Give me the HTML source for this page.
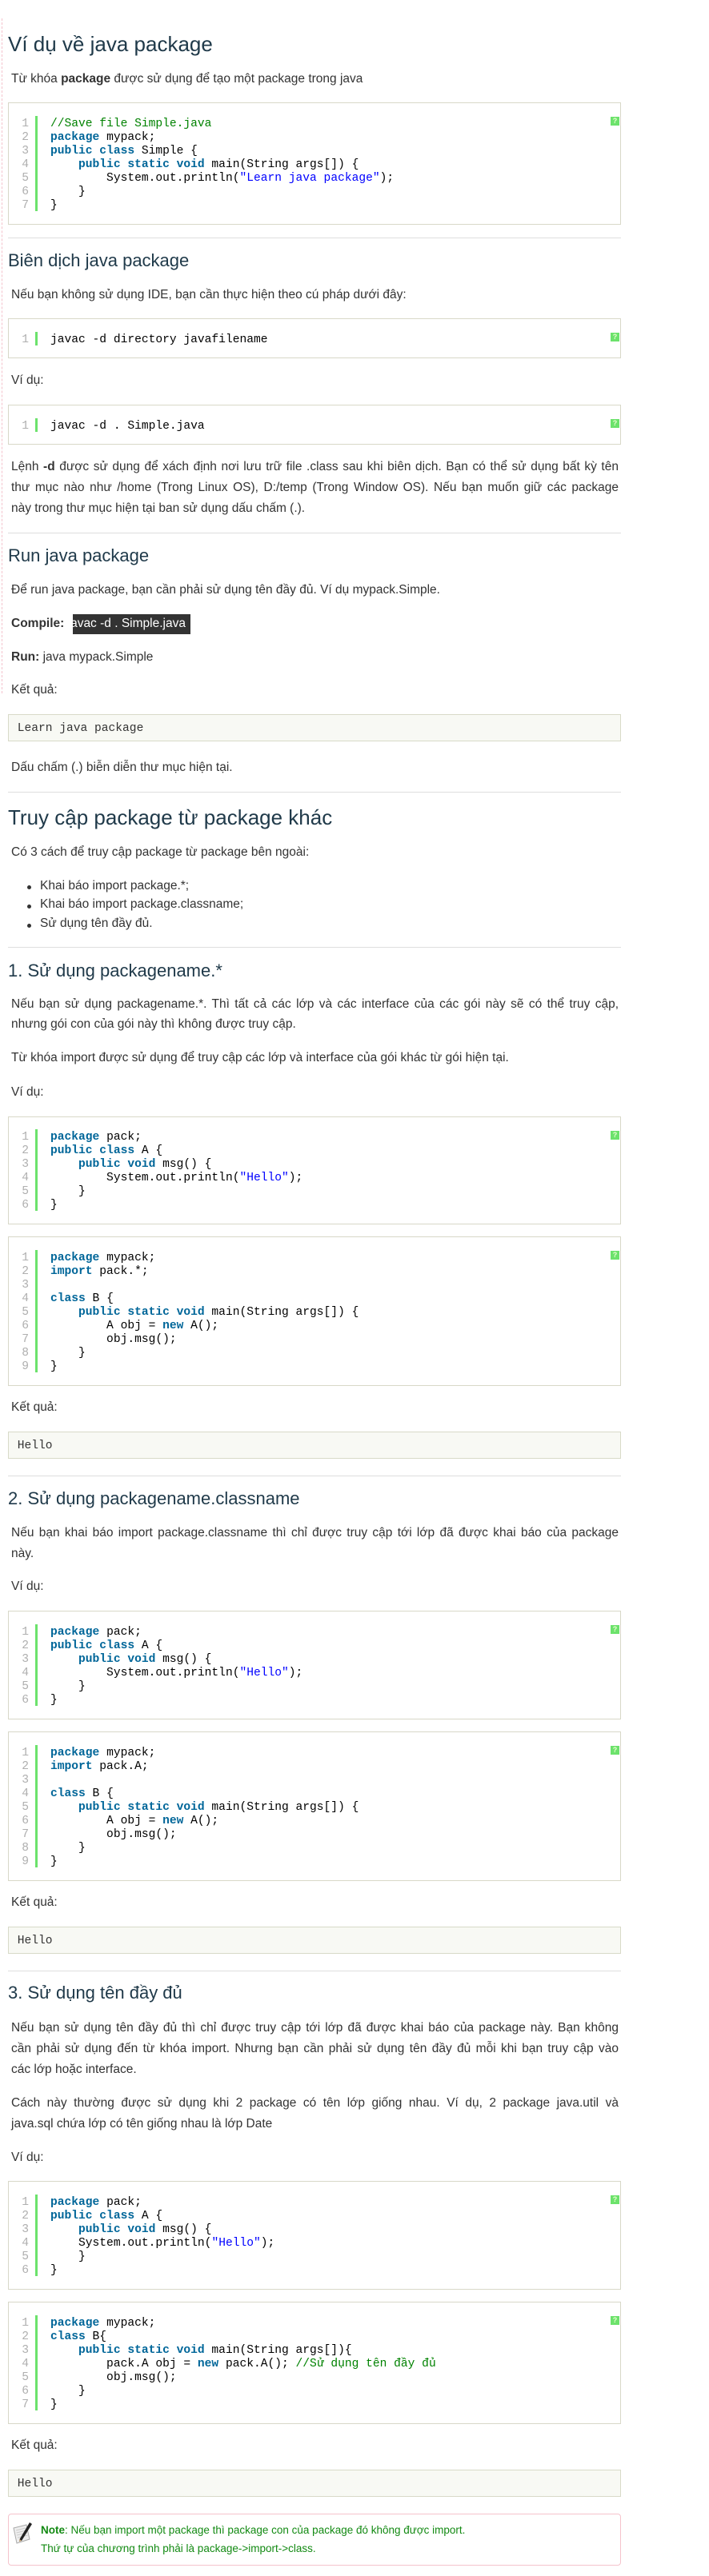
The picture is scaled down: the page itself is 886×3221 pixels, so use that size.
<!DOCTYPE html>
<html><head><meta charset="utf-8">
<style>
*{margin:0;padding:0;box-sizing:border-box}
body{width:886px;height:3221px;background:#fff;position:relative;overflow:hidden;font-family:"Liberation Sans",Arial,sans-serif;color:#333}
.t{position:absolute;left:14px;font-size:15.5px;line-height:26px;white-space:nowrap}
.j{position:absolute;left:14px;width:759px;font-size:15.5px;line-height:26px;text-align:justify;text-align-last:justify;white-space:nowrap}
.h2{position:absolute;left:10px;font-size:26px;line-height:30px;color:#203a4a;white-space:nowrap}
.h3{position:absolute;left:10px;font-size:22px;line-height:26px;color:#203a4a;white-space:nowrap}
.hr{position:absolute;left:10px;width:766px;height:1px;background:#dedede}
.cb{position:absolute;left:10px;width:766px;border:1px solid #d8d8c8;background:#fff}
.cb .bar{position:absolute;left:33px;top:15.7px;width:3px;background:#6ce26c}
.cb .ln{position:absolute;left:0;top:17.6px;width:25px;text-align:right;color:#afafaf;font-family:"Liberation Mono",monospace;font-size:14.6px;line-height:17px;white-space:pre}
.cb .cd{position:absolute;left:52px;top:17.6px;color:#000;font-family:"Liberation Mono",monospace;font-size:14.6px;line-height:17px;white-space:pre}
.cb .q{position:absolute;left:752px;top:17px;width:11px;height:11px;background:#6ce26c;color:#eaffd0;font:bold 9px/11px "Liberation Sans",sans-serif;text-align:center}
.k{color:#006699;font-weight:bold}
.s{color:#0000ff}
.c{color:#008200}
.ob{position:absolute;left:10px;width:766px;height:34px;border:1px solid #d8dac8;background:#f8f9f4;font-family:"Liberation Mono",monospace;font-size:14.6px;line-height:17px;color:#333;padding:9.2px 0 0 10.7px;white-space:pre}
.dot{position:absolute;left:34px;width:5px;height:5px;border-radius:50%;background:#333}
</style></head><body>
<div style="position:absolute;left:2px;top:23px;height:844px;border-left:1px dashed #f4c2cc"></div>

<div class="h2" style="top:39.6px">Ví dụ về java package</div>
<div class="t" style="top:86.1px">Từ khóa <b>package</b> được sử dụng để tạo một package trong java</div>

<div class="cb" style="top:128px;height:153px"><div class="bar" style="height:119px"></div><div class="q">?</div>
<div class="ln">1
2
3
4
5
6
7</div><div class="cd"><span class="c">//Save file Simple.java</span>
<span class="k">package</span> mypack;
<span class="k">public class</span> Simple {
    <span class="k">public static void</span> main(String args[]) {
        System.out.println(<span class="s">"Learn java package"</span>);
    }
}</div></div>

<div class="hr" style="top:297px"></div>
<div class="h3" style="top:313.3px">Biên dịch java package</div>
<div class="t" style="top:356.1px">Nếu bạn không sử dụng IDE, bạn cần thực hiện theo cú pháp dưới đây:</div>
<div class="cb" style="top:398px;height:50.4px"><div class="bar" style="height:17px"></div><div class="q">?</div><div class="ln">1</div><div class="cd">javac -d directory javafilename</div></div>
<div class="t" style="top:463.2px">Ví dụ:</div>
<div class="cb" style="top:506px;height:50.4px"><div class="bar" style="height:17px"></div><div class="q">?</div><div class="ln">1</div><div class="cd">javac -d . Simple.java</div></div>

<div class="j" style="top:571.1px">Lệnh <b>-d</b> được sử dụng để xách định nơi lưu trữ file .class sau khi biên dịch. Bạn có thể sử dụng bất kỳ tên</div>
<div class="j" style="top:597.2px">thư mục nào như /home (Trong Linux OS), D:/temp (Trong Window OS). Nếu bạn muốn giữ các package</div>
<div class="t" style="top:623.2px">này trong thư mục hiện tại ban sử dụng dấu chấm (.).</div>

<div class="hr" style="top:666px"></div>
<div class="h3" style="top:682.3px">Run java package</div>
<div class="t" style="top:724.7px">Để run java package, bạn cần phải sử dụng tên đầy đủ. Ví dụ mypack.Simple.</div>
<div style="position:absolute;left:90.5px;top:767.5px;width:147px;height:25px;background:#333"></div>
<div class="t" style="top:766.8px"><b>Compile:</b> <span style="color:#fff">javac -d . Simple.java</span></div>
<div class="t" style="top:808.9px"><b>Run:</b> java mypack.Simple</div>
<div class="t" style="top:849.7px">Kết quả:</div>
<div class="ob" style="top:893.2px">Learn java package</div>
<div class="t" style="top:947.2px">Dấu chấm (.) biễn diễn thư mục hiện tại.</div>

<div class="hr" style="top:990px"></div>
<div class="h2" style="top:1006.7px">Truy cập package từ package khác</div>
<div class="t" style="top:1053.2px">Có 3 cách để truy cập package từ package bên ngoài:</div>
<div class="dot" style="top:1107px"></div><div class="t" style="left:50px;top:1094.5px">Khai báo import package.*;</div>
<div class="dot" style="top:1131px"></div><div class="t" style="left:50px;top:1118px">Khai báo import package.classname;</div>
<div class="dot" style="top:1155px"></div><div class="t" style="left:50px;top:1142px">Sử dụng tên đầy đủ.</div>

<div class="hr" style="top:1184px"></div>
<div class="h3" style="top:1200.8px">1. Sử dụng packagename.*</div>
<div class="j" style="top:1242.6px">Nếu bạn sử dụng packagename.*. Thì tất cả các lớp và các interface của các gói này sẽ có thể truy cập,</div>
<div class="t" style="top:1268.3px">nhưng gói con của gói này thì không được truy cập.</div>
<div class="t" style="top:1310.4px">Từ khóa import được sử dụng để truy cập các lớp và interface của gói khác từ gói hiện tại.</div>
<div class="t" style="top:1352.5px">Ví dụ:</div>

<div class="cb" style="top:1395.5px;height:135.4px"><div class="bar" style="height:102px"></div><div class="q">?</div>
<div class="ln">1
2
3
4
5
6</div><div class="cd"><span class="k">package</span> pack;
<span class="k">public class</span> A {
    <span class="k">public void</span> msg() {
        System.out.println(<span class="s">"Hello"</span>);
    }
}</div></div>

<div class="cb" style="top:1546.3px;height:186.4px"><div class="bar" style="height:153px"></div><div class="q">?</div>
<div class="ln">1
2
3
4
5
6
7
8
9</div><div class="cd"><span class="k">package</span> mypack;
<span class="k">import</span> pack.*;

<span class="k">class</span> B {
    <span class="k">public static void</span> main(String args[]) {
        A obj = <span class="k">new</span> A();
        obj.msg();
    }
}</div></div>

<div class="t" style="top:1746.8px">Kết quả:</div>
<div class="ob" style="top:1790.3px">Hello</div>

<div class="hr" style="top:1845px"></div>
<div class="h3" style="top:1861.1px">2. Sử dụng packagename.classname</div>
<div class="j" style="top:1903.5px">Nếu bạn khai báo import package.classname thì chỉ được truy cập tới lớp đã được khai báo của package</div>
<div class="t" style="top:1929.5px">này.</div>
<div class="t" style="top:1971.1px">Ví dụ:</div>

<div class="cb" style="top:2014.3px;height:135.4px"><div class="bar" style="height:102px"></div><div class="q">?</div>
<div class="ln">1
2
3
4
5
6</div><div class="cd"><span class="k">package</span> pack;
<span class="k">public class</span> A {
    <span class="k">public void</span> msg() {
        System.out.println(<span class="s">"Hello"</span>);
    }
}</div></div>

<div class="cb" style="top:2165.3px;height:186.4px"><div class="bar" style="height:153px"></div><div class="q">?</div>
<div class="ln">1
2
3
4
5
6
7
8
9</div><div class="cd"><span class="k">package</span> mypack;
<span class="k">import</span> pack.A;

<span class="k">class</span> B {
    <span class="k">public static void</span> main(String args[]) {
        A obj = <span class="k">new</span> A();
        obj.msg();
    }
}</div></div>

<div class="t" style="top:2365.8px">Kết quả:</div>
<div class="ob" style="top:2409.3px">Hello</div>

<div class="hr" style="top:2464px"></div>
<div class="h3" style="top:2479.4px">3. Sử dụng tên đầy đủ</div>
<div class="j" style="top:2522.5px">Nếu bạn sử dụng tên đầy đủ thì chỉ được truy cập tới lớp đã được khai báo của package này. Bạn không</div>
<div class="j" style="top:2548.5px">cần phải sử dụng đến từ khóa import. Nhưng bạn cần phải sử dụng tên đầy đủ mỗi khi bạn truy cập vào</div>
<div class="t" style="top:2574.5px">các lớp hoặc interface.</div>
<div class="j" style="top:2616.8px">Cách này thường được sử dụng khi 2 package có tên lớp giống nhau. Ví dụ, 2 package java.util và</div>
<div class="t" style="top:2642.5px">java.sql chứa lớp có tên giống nhau là lớp Date</div>
<div class="t" style="top:2684.5px">Ví dụ:</div>

<div class="cb" style="top:2727.3px;height:135.4px"><div class="bar" style="height:102px"></div><div class="q">?</div>
<div class="ln">1
2
3
4
5
6</div><div class="cd"><span class="k">package</span> pack;
<span class="k">public class</span> A {
    <span class="k">public void</span> msg() {
    System.out.println(<span class="s">"Hello"</span>);
    }
}</div></div>

<div class="cb" style="top:2878.3px;height:152.4px"><div class="bar" style="height:119px"></div><div class="q">?</div>
<div class="ln">1
2
3
4
5
6
7</div><div class="cd"><span class="k">package</span> mypack;
<span class="k">class</span> B{
    <span class="k">public static void</span> main(String args[]){
        pack.A obj = <span class="k">new</span> pack.A(); <span class="c">//Sử dụng tên đầy đủ</span>
        obj.msg();
    }
}</div></div>

<div class="t" style="top:3045.1px">Kết quả:</div>
<div class="ob" style="top:3088.3px">Hello</div>

<div style="position:absolute;left:10px;top:3143.3px;width:766px;height:65px;border:1px solid #f5c3cc;border-radius:4px;background:#fff"></div>
<svg style="position:absolute;left:15px;top:3153px" width="28" height="30" viewBox="0 0 28 30">
<path d="M2 8 L18 4 L22 22 L6 27 Z" fill="#eeeeee" stroke="#aaa" stroke-width="1"/>
<path d="M5 11 L17 8 M5.5 14 L18 11 M6 17 L19 14 M7 20 L19.5 17" stroke="#ccc" stroke-width="1"/>
<path d="M22 1 L25 3 L12 24 L9 25 L9.5 22 Z" fill="#222"/>
<path d="M9.5 22 L12 24 L9 25 Z" fill="#d9b27c"/>
</svg>
<div style="position:absolute;left:51px;top:3155.4px;font-size:13.5px;line-height:18px;color:#138a13;white-space:nowrap"><b>Note</b>: Nếu bạn import một package thì package con của package đó không được import.</div>
<div style="position:absolute;left:51px;top:3177.8px;font-size:13.5px;line-height:18px;color:#138a13;white-space:nowrap">Thứ tự của chương trình phải là package-&gt;import-&gt;class.</div>
</body></html>
